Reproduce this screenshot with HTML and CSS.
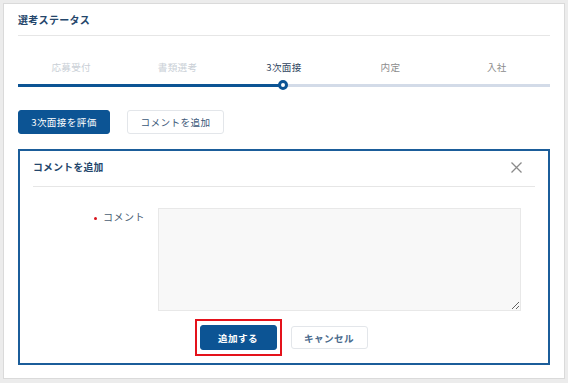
FILE: index.html
```html
<!DOCTYPE html>
<html lang="ja">
<head>
  <meta charset="UTF-8">
  <meta name="viewport" content="width=device-width, initial-scale=1.0">
  <title>選考ステータス</title>
  <link rel="stylesheet" href="styles.css">
</head>
<body>
<div class="card">
  <div class="card-header">
    <h1>選考ステータス</h1>
  </div>

  <div class="steps">
    <div class="step-labels">
      <span class="step done">応募受付</span>
      <span class="step done">書類選考</span>
      <span class="step current">3次面接</span>
      <span class="step">内定</span>
      <span class="step">入社</span>
    </div>
    <div class="step-track">
      <div class="track-fill"></div>
      <div class="track-rest"></div>
      <span class="track-dot"></span>
    </div>
  </div>

  <div class="action-group">
    <button type="button" class="button-primary button-evaluate">3次面接を評価</button>
    <button type="button" class="button-outline button-comment">コメントを追加</button>
  </div>

  <div class="panel">
    <div class="panel-header">
      <h2>コメントを追加</h2>
      <button type="button" class="close-button" aria-label="閉じる">
        <svg width="11" height="11" viewBox="0 0 11 11">
          <path d="M0.5 0.5 L10.5 10.5 M10.5 0.5 L0.5 10.5" stroke="#8a8a8a" stroke-width="1.3" fill="none"/>
        </svg>
      </button>
    </div>
    <form class="panel-body" id="comment-form">
      <div class="form-row">
        <label for="comment" class="required">コメント</label>
        <textarea id="comment"></textarea>
      </div>
      <div class="submit-group">
        <span class="highlight">
          <button type="submit" class="button-primary button-submit">追加する</button>
        </span>
        <button type="button" class="button-outline button-cancel">キャンセル</button>
      </div>
    </form>
  </div>
</div>
</body>
</html>
```

FILE: styles.css
```css
body {
  margin: 0;
  padding: 3px 3px 4px 3px;
  background-color: #ececec;
  font-family: "Noto Sans CJK JP", "Noto Sans", sans-serif;
  font-size: 10px;
  color: #333;
}

.card {
  background: white;
  border: 1px solid #dadada;
  padding: 0 14px 13px 14px;
}

.card-header {
  height: 31px;
  display: flex;
  align-items: center;
  border-bottom: 1px solid #e6e6e6;
}

.card-header h1 {
  margin: 0;
  font-size: 10px;
  font-weight: bold;
  color: #24466b;
  letter-spacing: 0.3px;
}

.steps {
  margin-top: 24px;
}

.step-labels {
  display: grid;
  grid-template-columns: repeat(5, 1fr);
  text-align: center;
  line-height: 14px;
  font-size: 9.6px;
  letter-spacing: 0.3px;
}

.step {
  color: #8c8c8c;
}

.step.done {
  color: #c9cfd6;
}

.step.current {
  color: #2f4560;
}

.step-track {
  position: relative;
  display: flex;
  align-items: center;
  height: 10px;
  margin-top: 6px;
}

.track-fill {
  width: 50%;
  height: 3px;
  background-color: #0c5494;
}

.track-rest {
  flex: 1;
  height: 3px;
  background-color: #d3dbe8;
}

.track-dot {
  position: absolute;
  left: 50%;
  top: 0;
  width: 4px;
  height: 4px;
  margin-left: -6px;
  border: 3px solid #0c5494;
  border-radius: 50%;
  background: white;
}

.action-group {
  display: flex;
  gap: 17px;
  margin-top: 20px;
}

.button-primary,
.button-outline {
  height: 24px;
  padding: 0;
  border-radius: 3px;
  font-family: inherit;
  font-size: 9.6px;
  letter-spacing: 0.4px;
  cursor: pointer;
}

.button-primary {
  background-color: #0c5494;
  border: 1px solid #0c5494;
  color: white;
}

.button-outline {
  background: white;
  border: 1px solid #e3e6ea;
  color: #3b5878;
}

.button-evaluate {
  width: 92px;
}

.button-comment {
  width: 97px;
}

.panel {
  margin-top: 15px;
  border: 2px solid #1b5d9a;
  padding: 0 13px 7px 13px;
}

.panel-header {
  display: flex;
  align-items: center;
  justify-content: space-between;
  border-bottom: 1px solid #e6e6e6;
  padding-bottom: 3px;
  box-sizing: border-box;
  height: 36px;
}

.panel-header h2 {
  margin: 0;
  font-size: 9.8px;
  font-weight: bold;
  color: #24466b;
  letter-spacing: 0.3px;
}

.close-button {
  display: flex;
  padding: 0;
  margin-right: 13px;
  border: none;
  background: none;
  cursor: pointer;
}

.panel-body {
  margin: 0;
  padding-top: 21px;
}

.form-row {
  display: grid;
  grid-template-columns: 113px 1fr;
  gap: 12px;
  padding-right: 14px;
}

.form-row label {
  text-align: right;
  padding-top: 2px;
  padding-right: 1px;
  line-height: 14px;
  color: #4a5d73;
  letter-spacing: 0.5px;
}

.form-row label.required::before {
  content: "";
  display: inline-block;
  width: 3px;
  height: 3px;
  margin-right: 6px;
  vertical-align: middle;
  border-radius: 50%;
  background-color: #d8141c;
}

.form-row textarea {
  height: 103px;
  box-sizing: border-box;
  background-color: #f8f8f8;
  border: 1px solid #e8e8e8;
  border-radius: 0;
  font-family: inherit;
  font-size: 10px;
}

.submit-group {
  display: flex;
  align-items: center;
  justify-content: center;
  gap: 9px;
  margin-top: 8px;
  padding-right: 6px;
}

.highlight {
  display: flex;
  padding: 4px 3px;
  border: 2px solid #e4121b;
}

.button-submit {
  width: 77px;
  height: 25px;
  font-weight: bold;
}

.button-cancel {
  width: 77px;
  height: 23px;
  font-weight: bold;
  color: #4a6a8c;
}
```
